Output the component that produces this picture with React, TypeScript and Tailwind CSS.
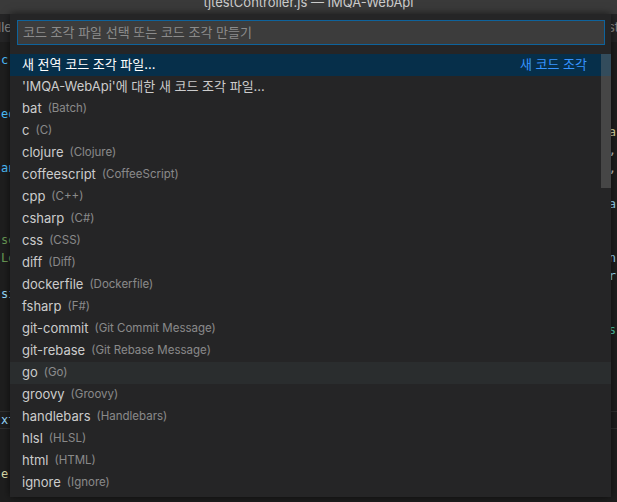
const items: [string, string][] = [
  ['bat', 'Batch'],
  ['c', 'C'],
  ['clojure', 'Clojure'],
  ['coffeescript', 'CoffeeScript'],
  ['cpp', 'C++'],
  ['csharp', 'C#'],
  ['css', 'CSS'],
  ['diff', 'Diff'],
  ['dockerfile', 'Dockerfile'],
  ['fsharp', 'F#'],
  ['git-commit', 'Git Commit Message'],
  ['git-rebase', 'Git Rebase Message'],
  ['go', 'Go'],
  ['groovy', 'Groovy'],
  ['handlebars', 'Handlebars'],
  ['hlsl', 'HLSL'],
  ['html', 'HTML'],
  ['ignore', 'Ignore'],
]

// editor lines behind the picker: [left fragment, colour, right fragment, colour]
const lines: [string, string, string, string][] = [
  ['c', 'text-[#4fc1ff]', '', ''],
  ['', '', '', ''],
  ['', '', '', ''],
  ['eq', 'text-[#4fc1ff]', '', ''],
  ['', '', 'a', 'text-[#dcdcaa]'],
  ['', '', ',', 'text-[#d4d4d4]'],
  ['ano', 'text-[#4fc1ff]', ',', 'text-[#d4d4d4]'],
  ['', '', '', ''],
  ['', '', 'a', 'text-[#9cdcfe]'],
  ['', '', '', ''],
  ['se_', 'text-[#6a9955]', '', ''],
  ['Lo', 'text-[#6a9955]', 'n', 'text-[#9cdcfe]'],
  ['', '', 'r', 'text-[#9cdcfe]'],
  ['si', 'text-[#9cdcfe]', '', ''],
  ['', '', '', ''],
  ['', '', 's', 'text-[#4ec9b0]'],
  ['', '', '', ''],
  ['', '', '', ''],
  ['', '', '', ''],
  ['', '', '', ''],
  ['xt', 'text-[#9cdcfe]', '', ''],
  ['', '', '', ''],
  ['', '', '', ''],
  ['e(', 'text-[#dcdcaa]', '', ''],
]

export default function App() {
  return (
    <div className="relative h-[502px] w-[617px] overflow-hidden bg-[#1e1e1e] font-['Inter','Noto_Sans_CJK_KR',sans-serif]">
      <div className="h-[14px] overflow-hidden bg-[#3a3a3a]">
        <div className="-mt-[9px] h-[22px] text-center text-[13px] leading-[22px] text-[#cccccc]">
          tjtestController.js — IMQA-WebApi
        </div>
      </div>
      <div className="flex h-[28px] items-center justify-between bg-[#252526] text-[13px] text-[#8a8a8a]">
        <span className="-ml-[2px]">lle</span>
        <span className="-mr-[2px]">st</span>
      </div>
      <div className="pt-[9px] font-['DejaVu_Sans_Mono',monospace] text-[12px]">
        {lines.map(([l, lc, r, rc], i) => (
          <div
            key={i}
            className={`flex h-[18px] items-center justify-between leading-[18px] ${i === 20 ? 'border-y border-[#303030]' : ''}`}
          >
            <span className={`pl-[1px] ${lc}`}>{l}</span>
            <span className={`pr-[1px] ${rc}`}>{r}</span>
          </div>
        ))}
      </div>

      <div className="absolute left-[10px] top-[14px] flex h-[483px] w-[601px] flex-col bg-[#252526] shadow-[0_0_8px_rgba(0,0,0,0.6)]">
        <div className="px-[7px] pr-[6px] pt-[6px]">
          <div className="flex h-[25px] items-center border border-[#0e639c] bg-[#3c3c3c] px-[5px] text-[13px] text-[#8b8b8b]">
            코드 조각 파일 선택 또는 코드 조각 만들기
          </div>
        </div>
        <div className="relative mt-[9px] text-[13px]">
          <div className="flex h-[22px] items-center justify-between bg-[#062f4a] pl-[12px] pr-[24px] text-white">
            <span>새 전역 코드 조각 파일...</span>
            <span className="text-[#3794ff]">새 코드 조각</span>
          </div>
          <div className="flex h-[22px] items-center pl-[12px] text-[#cccccc]">
            'IMQA-WebApi'에 대한 새 코드 조각 파일...
          </div>
          {items.map(([name, desc]) => (
            <div
              key={name}
              className={`flex h-[22px] items-center gap-[6px] pl-[12px] ${name === 'go' ? 'bg-[#2a2d2e]' : ''}`}
            >
              <span className="text-[#cccccc]">{name}</span>
              <span className="text-[11.5px] text-[#cccccc] opacity-60">({desc})</span>
            </div>
          ))}
          <div className="absolute right-0 top-0 h-[134px] w-[10px] bg-[rgba(121,121,121,0.4)]" />
        </div>
      </div>
    </div>
  )
}
